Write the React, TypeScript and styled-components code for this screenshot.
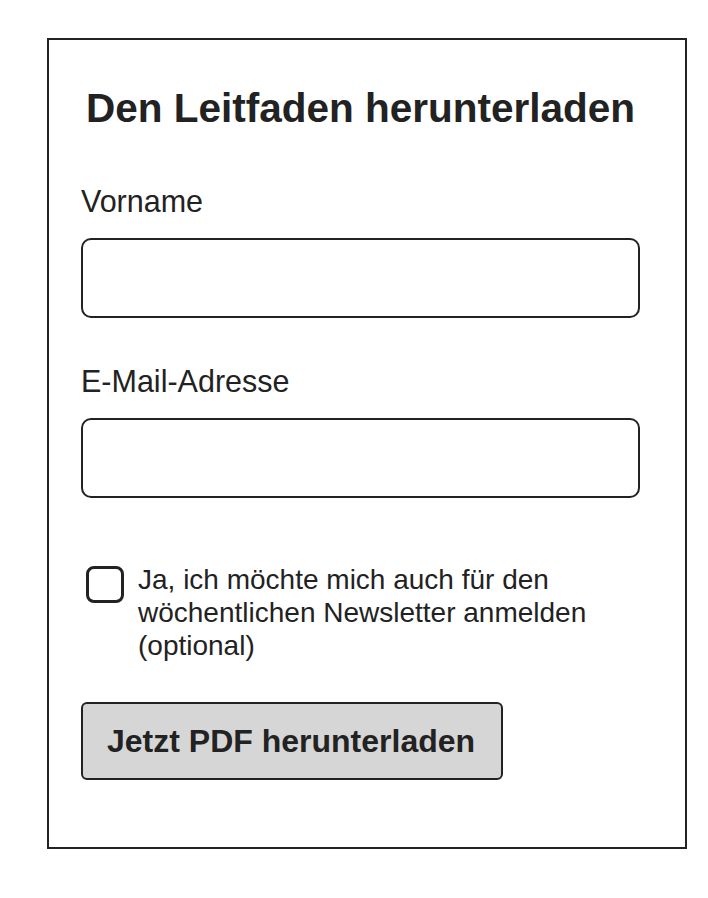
import React from 'react';
import styled, {createGlobalStyle} from "styled-components";

const GlobalStyle = createGlobalStyle`
  html, body {
    margin: 0;
    padding: 0;
    background: #fff;
  }
  body {
    font-family: "Liberation Sans", Arial, Helvetica, sans-serif;
    color: #222;
  }
`

const Page = styled.div`
  padding: 38px 0 48px 47px;
`

const Card = styled.form`
  box-sizing: border-box;
  width: 640px;
  border: 2px solid #222;
  padding: 44px 45px 67px 32px;
  display: flex;
  flex-direction: column;
`

const Title = styled.h2`
  margin: 0 0 51px;
  font-size: 40.5px;
  line-height: 48px;
  font-weight: 700;
  text-align: center;
`

const Field = styled.label`
  display: flex;
  flex-direction: column;
  gap: 19px;
  margin-bottom: ${({$last}: { $last?: boolean }) => $last ? 65 : 45}px;
`

const LabelText = styled.span`
  font-size: 30.5px;
  line-height: 36px;
`

const Input = styled.input`
  box-sizing: border-box;
  width: 100%;
  height: 80px;
  border: 2px solid #222;
  border-radius: 10px;
  background: #fff;
  font: inherit;
  font-size: 28px;
  padding: 0 16px;
  outline: none;
`

const CheckRow = styled.label`
  display: flex;
  align-items: flex-start;
  gap: 14px;
  padding-left: 5px;
  margin-bottom: 40px;
`

const Box = styled.span`
  box-sizing: border-box;
  flex: none;
  width: 38px;
  height: 37px;
  margin-top: 3px;
  border: 3px solid #222;
  border-radius: 8px;
  background: #fff;
`

const CheckText = styled.span`
  font-size: 28px;
  line-height: 33px;
  max-width: 470px;
`

const Button = styled.button`
  box-sizing: border-box;
  align-self: flex-start;
  width: 422px;
  height: 78px;
  border: 2px solid #222;
  border-radius: 6px;
  background: #d6d6d6;
  color: #222;
  font-family: inherit;
  font-size: 32px;
  font-weight: 700;
  padding: 0 24px;
  text-align: left;
  cursor: pointer;
`

function App() {
    return (
        <Page>
            <GlobalStyle/>
            <Card onSubmit={e => e.preventDefault()}>
                <Title>Den Leitfaden herunterladen</Title>
                <Field>
                    <LabelText>Vorname</LabelText>
                    <Input type="text"/>
                </Field>
                <Field $last>
                    <LabelText>E-Mail-Adresse</LabelText>
                    <Input type="email"/>
                </Field>
                <CheckRow>
                    <Box/>
                    <CheckText>Ja, ich möchte mich auch für den wöchentlichen Newsletter anmelden (optional)</CheckText>
                </CheckRow>
                <Button type="submit">Jetzt PDF herunterladen</Button>
            </Card>
        </Page>
    );
}

export default App;
